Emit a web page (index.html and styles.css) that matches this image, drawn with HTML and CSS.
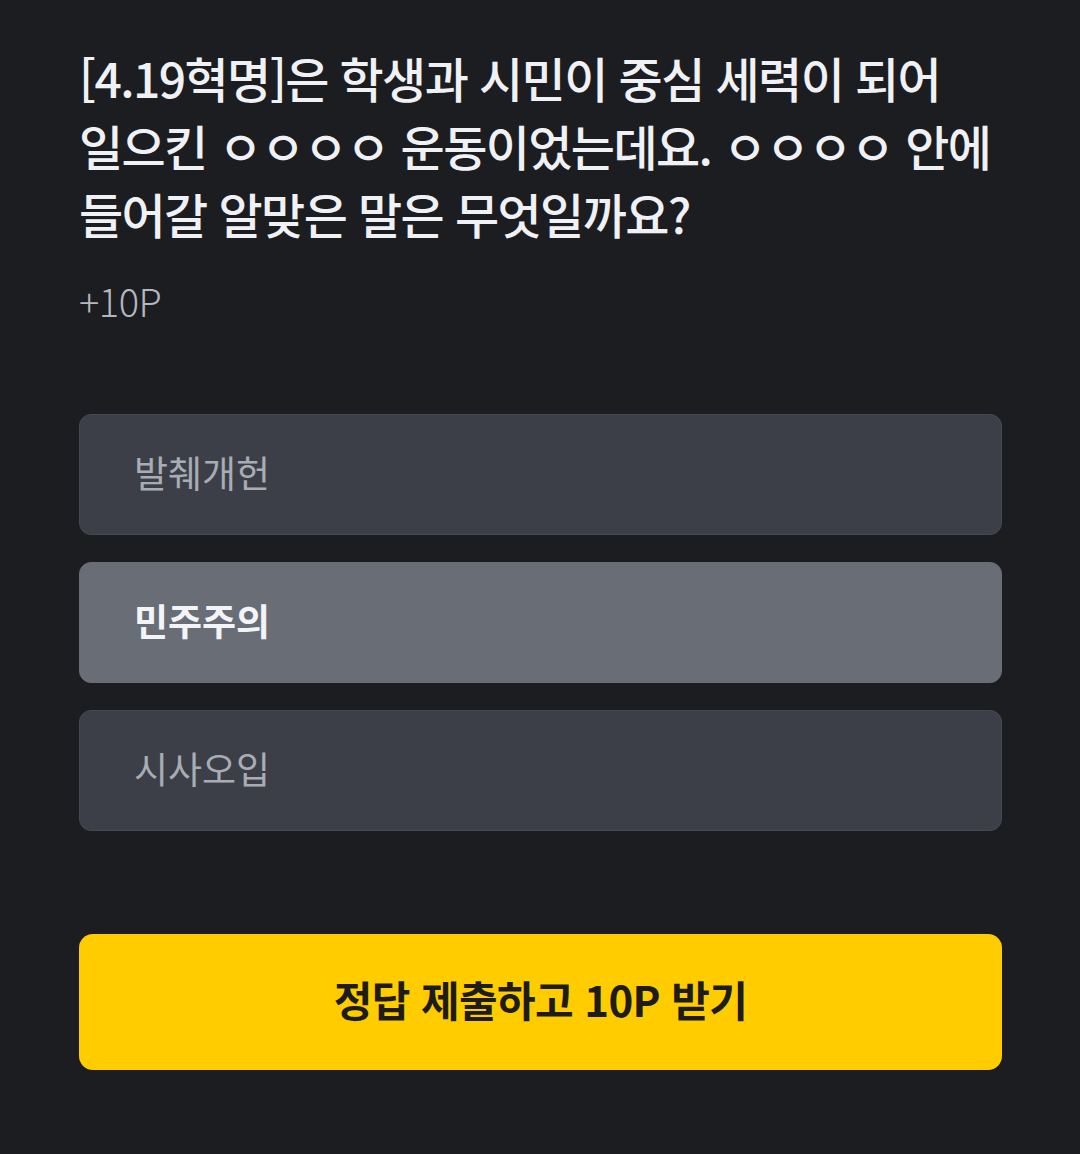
FILE: index.html
```html
<!DOCTYPE html>
<html lang="ko">
<head>
<meta charset="utf-8">
<link rel="stylesheet" href="styles.css">
</head>
<body>
<main class="quiz">
  <h1 class="question">[4.19혁명]은 학생과 시민이 중심 세력이 되어 일으킨 ㅇㅇㅇㅇ 운동이었는데요. ㅇㅇㅇㅇ 안에 들어갈 알맞은 말은 무엇일까요?</h1>
  <p class="points">+10P</p>
  <ul class="options">
    <li class="option">발췌개헌</li>
    <li class="option selected">민주주의</li>
    <li class="option">시사오입</li>
  </ul>
  <button class="submit">정답 제출하고 10P 받기</button>
</main>
</body>
</html>
```
FILE: styles.css
```css
html, body {
  margin: 0;
  padding: 0;
  background: #1c1d21;
}
body {
  font-family: "Noto Sans CJK KR", "Noto Sans", sans-serif;
  color: #f1f2f6;
}
.quiz {
  padding: 43px 78px 0 79px;
  display: flex;
  flex-direction: column;
}
.question {
  margin: 0 -20px 0 0;
  font-size: 48px;
  line-height: 68px;
  font-weight: 500;
  color: #f0f1f5;
  letter-spacing: -1.6px;
  word-break: keep-all;
}
.points {
  margin: 30px 0 0;
  font-size: 38px;
  line-height: 48px;
  font-weight: 300;
  color: #b4b7bd;
  letter-spacing: -0.5px;
}
.options {
  list-style: none;
  margin: 89px 0 0;
  padding: 0;
  display: flex;
  flex-direction: column;
  gap: 27px;
}
.option {
  box-sizing: border-box;
  height: 121px;
  display: flex;
  align-items: center;
  padding: 0 0 5px 54px;
  background: #3c3f47;
  border: 1.5px solid #464951;
  border-radius: 12px;
  font-size: 37px;
  font-weight: 400;
  color: #a8acb4;
}
.option.selected {
  background: #696d76;
  border-color: #696d76;
  color: #f3f4f8;
  font-weight: 700;
}
.submit {
  margin-top: 103px;
  height: 136px;
  padding: 0 0 8px;
  border: none;
  border-radius: 14px;
  background: #ffcc00;
  color: #1d1c18;
  font-family: inherit;
  font-size: 42px;
  font-weight: 700;
  letter-spacing: -0.6px;
}
```
